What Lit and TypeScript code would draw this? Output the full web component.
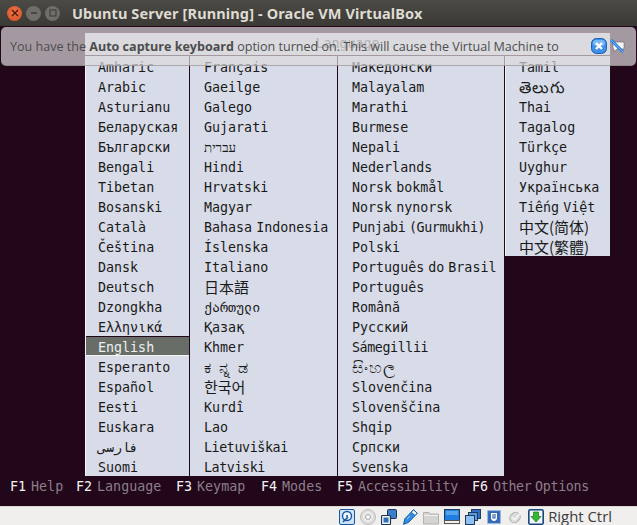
import { LitElement, css, html, svg } from 'lit';
import { customElement } from 'lit/decorators.js';
import { classMap } from 'lit/directives/class-map.js';

const columns = [
  ['Amharic', 'Arabic', 'Asturianu', 'Беларуская', 'Български', 'Bengali', 'Tibetan', 'Bosanski', 'Català', 'Čeština', 'Dansk', 'Deutsch', 'Dzongkha', 'Ελληνικά', 'English', 'Esperanto', 'Español', 'Eesti', 'Euskara', 'فارسی', 'Suomi'],
  ['Français', 'Gaeilge', 'Galego', 'Gujarati', 'עברית', 'Hindi', 'Hrvatski', 'Magyar', 'Bahasa Indonesia', 'Íslenska', 'Italiano', '日本語', 'ქართული', 'Қазақ', 'Khmer', 'ಕನ್ನಡ', '한국어', 'Kurdî', 'Lao', 'Lietuviškai', 'Latviski'],
  ['Македонски', 'Malayalam', 'Marathi', 'Burmese', 'Nepali', 'Nederlands', 'Norsk bokmål', 'Norsk nynorsk', 'Punjabi (Gurmukhi)', 'Polski', 'Português do Brasil', 'Português', 'Română', 'Русский', 'Sámegillii', 'සිංහල', 'Slovenčina', 'Slovenščina', 'Shqip', 'Српски', 'Svenska'],
  ['Tamil', 'తెలుగు', 'Thai', 'Tagalog', 'Türkçe', 'Uyghur', 'Українська', 'Tiếng Việt', '中文(简体)', '中文(繁體)'],
];

// the boot menu font squeezes i and l, these come out visibly shorter
const narrow = new Set(['Lietuviškai', 'Sámegillii', 'Latviski', 'Punjabi (Gurmukhi)']);
const cjk = new Set(['日本語', '한국어', '中文(简体)', '中文(繁體)']);
const indic = new Set(['සිංහල', 'తెలుగు']);

// width is the distance to the next key
const fkeys = [
  { key: 'F1', label: 'Help', width: 66, tight: false },
  { key: 'F2', label: 'Language', width: 100, tight: false },
  { key: 'F3', label: 'Keymap', width: 85, tight: false },
  { key: 'F4', label: 'Modes', width: 76, tight: false },
  { key: 'F5', label: 'Accessibility', width: 135, tight: true },
  { key: 'F6', label: 'Other Options', width: 120, tight: true },
];

// status bar icons, 16x16 each
const icons = [
  svg`<rect x=".5" y=".5" width="15" height="15" rx="1.5" fill="#cfe3f8" stroke="#14589f"/><circle cx="8" cy="7" r="4.5" fill="#f4f9ff" stroke="#14589f" stroke-width="1.4"/><circle cx="8" cy="7" r="1" fill="#14589f"/><path d="M4 13l5-5" stroke="#14589f" stroke-width="1.6"/>`,
  svg`<circle cx="8" cy="8" r="7.5" fill="#dedede" stroke="#bcbcbc"/><circle cx="8" cy="8" r="5" fill="#ececec"/><circle cx="8" cy="8" r="2.5" fill="#f8f8f8" stroke="#a8a8a8"/>`,
  svg`<rect x="6.5" y=".5" width="9" height="9" rx="1" fill="#3a7fcb" stroke="#1f3550"/><rect x=".5" y="6.5" width="9" height="9" rx="1" fill="#f4f6f8" stroke="#1f3550" stroke-width="1.2"/><rect x="2.5" y="8.5" width="5" height="5" fill="#2f6db4"/>`,
  svg`<path d="M11.5.8l3.7 3.4-8.4 9-5.3 2.2 1.4-5.6z" fill="#2f8ee6" stroke="#15599f"/><path d="M11.5.8l3.7 3.4-2.2 2.4-3.7-3.4z" fill="#f4f8fc" stroke="#15599f"/><path d="M5 10l3-3" stroke="#9fd0f8"/>`,
  svg`<path d="M.5 3.5h5.5l1 1.5h8.500v10H.5z" fill="#d4d4d2" stroke="#b2b2b0"/><path d="M1 6.500h14" stroke="#f0f0ee"/>`,
  svg`<rect x=".5" y=".5" width="15" height="11" fill="#1f7fe0" stroke="#1e3b5c"/><path d="M2 2h12v4H2z" fill="#56a4ee"/><rect x=".5" y="11.500" width="15" height="3" fill="#f0f0f0" stroke="#555"/>`,
  svg`<rect x="6.500" y=".5" width="9" height="9" fill="#2f6fc0" stroke="#1e3b5c"/><rect x="3.500" y="3.500" width="9" height="8" fill="#5b9ade" stroke="#1e3b5c"/><rect x=".5" y="6.500" width="9" height="9" fill="#8fc0f2" stroke="#1e3b5c"/>`,
  svg`<rect x="1.500" y="1.500" width="13" height="13" fill="#3f78c8" stroke="#9db8dc" stroke-dasharray="1 1"/><rect x="2.500" y="2.500" width="11" height="11" fill="#3468b4"/><path d="M5 4h6v5c0 2-1.500 3-3 3s-3-1-3-3z" fill="#fff"/><path d="M7 5v4h2V5" fill="none" stroke="#3468b4" stroke-width="1.200"/>`,
  svg`<rect x="2.500" y="4" width="11" height="9" rx="4.500" transform="rotate(-40 8 8.500)" fill="#dcdcdc" stroke="#adadad"/><path d="M7.500 11l-2.500-3M8 10.500l5-6" stroke="#f6f6f6" stroke-width="1.500"/>`,
  svg`<rect x=".8" y=".8" width="14.400" height="14.400" rx="1.500" fill="#f2f6fb" stroke="#17467f" stroke-width="1.600"/><path d="M5.500 3h5v4.500h2.500L8 13 3 7.500h2.500z" fill="#35b535" stroke="#167a16" stroke-width=".7"/>`,
];

@customElement('app-root')
export class AppRoot extends LitElement {
  static styles = css`
    :host {
      display: block;
      width: 637px;
      height: 525px;
      position: relative;
      overflow: hidden;
      font-family: 'Open Sans', 'Noto Sans', sans-serif;
    }

    .window {
      height: 525px;
      display: flex;
      flex-direction: column;
      background: #f0efed;
    }

    .titlebar {
      height: 26px;
      flex: none;
      display: flex;
      align-items: center;
      padding-left: 7px;
      background: linear-gradient(#4b4a45, #3a3935);
      box-sizing: border-box;
    }

    .buttons {
      display: flex;
      gap: 4px;
      width: 65px;
      flex: none;
    }

    .btn {
      width: 15px;
      height: 15px;
      border-radius: 50%;
      background: #6f6e68;
      display: flex;
      align-items: center;
      justify-content: center;
    }

    .btn.close {
      background: radial-gradient(circle at 50% 40%, #f2754a, #d44d1e);
    }

    .title {
      color: #dfdbd2;
      font-size: 14.5px;
      letter-spacing: 0.13px;
      font-weight: 700;
      font-family: 'Noto Sans', 'Open Sans', sans-serif;
      white-space: nowrap;
    }

    .screen {
      height: 480px;
      flex: none;
      background: #22061a;
      position: relative;
      font-family: 'DejaVu Sans Mono', 'Noto Sans CJK SC', monospace;
      font-size: 13.33px;
      word-spacing: -4px;
    }

    .panel {
      margin-left: 85px;
      padding-top: 7px;
      height: 450px;
      display: flex;
      flex-direction: column;
      box-sizing: border-box;
    }

    .panel-title {
      width: 525px;
      height: 23px;
      line-height: 22px;
      box-sizing: border-box;
      background: #d8dce8;
      color: #555;
      text-align: center;
      border-bottom: 1px solid #22061a;
    }

    .cols {
      display: flex;
      align-items: flex-start;
    }

    .col {
      height: 420px;
      background: #d8dce8;
      border-right: 1px solid #22061a;
      box-sizing: border-box;
      padding-top: 2px;
    }

    .col:nth-child(1) { width: 105px; border-left: 1px solid #f4f4f4; }
    .col:nth-child(2) { width: 148px; }
    .col:nth-child(3) { width: 167px; }
    .col:nth-child(4) { width: 105px; height: 200px; border-right: none; border-left: 1px solid #f4f4f4; }

    .item {
      height: 20px;
      line-height: 20px;
      padding-left: 14px;
      color: #1a1a1a;
      white-space: nowrap;
      box-sizing: border-box;
    }

    .col:nth-child(1) .item { padding-left: 12px; }
    .col:nth-child(4) .item { padding-left: 13px; }

    .item.narrow { letter-spacing: -0.4px; }

    .item.cjk {
      font-family: 'Noto Sans CJK SC', 'Noto Sans CJK TC', sans-serif;
      font-size: 15px;
      line-height: 17px;
    }

    .item.indic {
      font-size: 16px;
      letter-spacing: 1px;
    }

    .item.kannada {
      font-size: 16px;
      letter-spacing: 8px;
    }

    .col:nth-child(1) .item.selected {
      background: #686d68;
      color: #eceff0;
      border-top: 1px solid #22061a;
      border-bottom: 1px solid #f4f4f4;
      margin: -2px 0 2px;
      padding: 2px 0 0 12px;
      line-height: 18px;
    }

    .fkeys {
      height: 20px;
      display: flex;
      align-items: center;
      padding-left: 10px;
      color: #8c7f89;
      white-space: pre;
    }

    .fkey {
      display: flex;
      flex: none;
    }

    .fkey.tight { letter-spacing: -0.35px; }

    .fkey b {
      font-weight: 400;
      color: #f2f2f2;
      margin-right: 5px;
      letter-spacing: 0;
    }

    .notice {
      position: absolute;
      left: 1px;
      top: 27px;
      width: 635px;
      height: 39px;
      border-radius: 5px;
      background: rgba(220, 216, 220, 0.7);
      border-bottom: 1px solid rgba(120, 120, 120, 0.5);
      box-sizing: border-box;
      padding: 0 11px 0 9px;
      display: flex;
      align-items: center;
      font-size: 12.55px;
      color: #4d4d4d;
      white-space: nowrap;
    }

    .notice svg {
      flex: none;
    }

    .notice .dismiss { margin-left: auto; }
    .notice .pin { margin-left: 3px; }

    .status {
      flex: 1;
      min-height: 0;
      display: flex;
      align-items: flex-start;
      justify-content: flex-end;
      gap: 5px;
      padding: 2px 25px 0 0;
      border-top: 1px solid #dcdad5;
    }

    .status svg {
      flex: none;
    }

    .hostkey {
      color: #3c3c3c;
      font-size: 14.9px;
      line-height: 15px;
      margin: 0 0 0 -1px;
    }
  `;

  render() {
    return html`
      <div class="window">
        <div class="titlebar">
          <div class="buttons">
            <div class="btn close">
              <svg width="8" height="8" viewBox="0 0 8 8"><path d="M1 1l6 6M7 1L1 7" stroke="#4a1a08" stroke-width="1.4"/></svg>
            </div>
            <div class="btn">
              <svg width="8" height="8" viewBox="0 0 8 8"><path d="M1 4h6" stroke="#3a3935" stroke-width="1.4"/></svg>
            </div>
            <div class="btn">
              <svg width="8" height="8" viewBox="0 0 8 8"><rect x="1" y="1" width="6" height="6" fill="none" stroke="#3a3935"/></svg>
            </div>
          </div>
          <div class="title">Ubuntu Server [Running] - Oracle VM VirtualBox</div>
        </div>
        <div class="screen">
          <div class="panel">
            <div class="panel-title">Language</div>
            <div class="cols">
              ${columns.map(
                (col) => html`<div class="col">
                  ${col.map(
                    (name) => html`<div
                      class="item ${classMap({
                        selected: name === 'English',
                        narrow: narrow.has(name),
                        cjk: cjk.has(name),
                        indic: indic.has(name),
                        kannada: name === 'ಕನ್ನಡ',
                      })}"
                    >${name}</div>`
                  )}
                </div>`
              )}
            </div>
          </div>
          <div class="fkeys">
            ${fkeys.map(
              (f) => html`<span class="fkey ${f.tight ? 'tight' : ''}" style="width: ${f.width}px"><b>${f.key}</b>${f.label}</span>`
            )}
          </div>
        </div>
        <div class="status">
          ${icons.map((icon) => html`<svg width="16" height="16" viewBox="0 0 16 16">${icon}</svg>`)}
          <span class="hostkey">Right Ctrl</span>
        </div>
      </div>
      <div class="notice">
        <span>You have the <b>Auto capture keyboard</b> option turned on. This will cause the Virtual Machine to</span>
        <svg class="dismiss" width="16" height="16" viewBox="0 0 16 16"><rect x=".5" y=".5" width="15" height="15" rx="5" fill="#3d8fe8" stroke="#1b5fb0"/><rect x="2" y="2" width="12" height="6" rx="3" fill="#7ab8f4"/><path d="M5 5l6 6M11 5l-6 6" stroke="#fff" stroke-width="2.4"/></svg>
        <svg class="pin" width="15" height="15" viewBox="0 0 15 15"><path d="M3 3h11v7H7l-3 3v-3H3z" fill="#f6f6f6" stroke="#666" stroke-width=".6"/><path d="M1 1l12 12" stroke="#2a7fdc" stroke-width="3"/><path d="M1 1l12 12" stroke="#8cc4f6" stroke-width=".8"/></svg>
      </div>
    `;
  }
}
